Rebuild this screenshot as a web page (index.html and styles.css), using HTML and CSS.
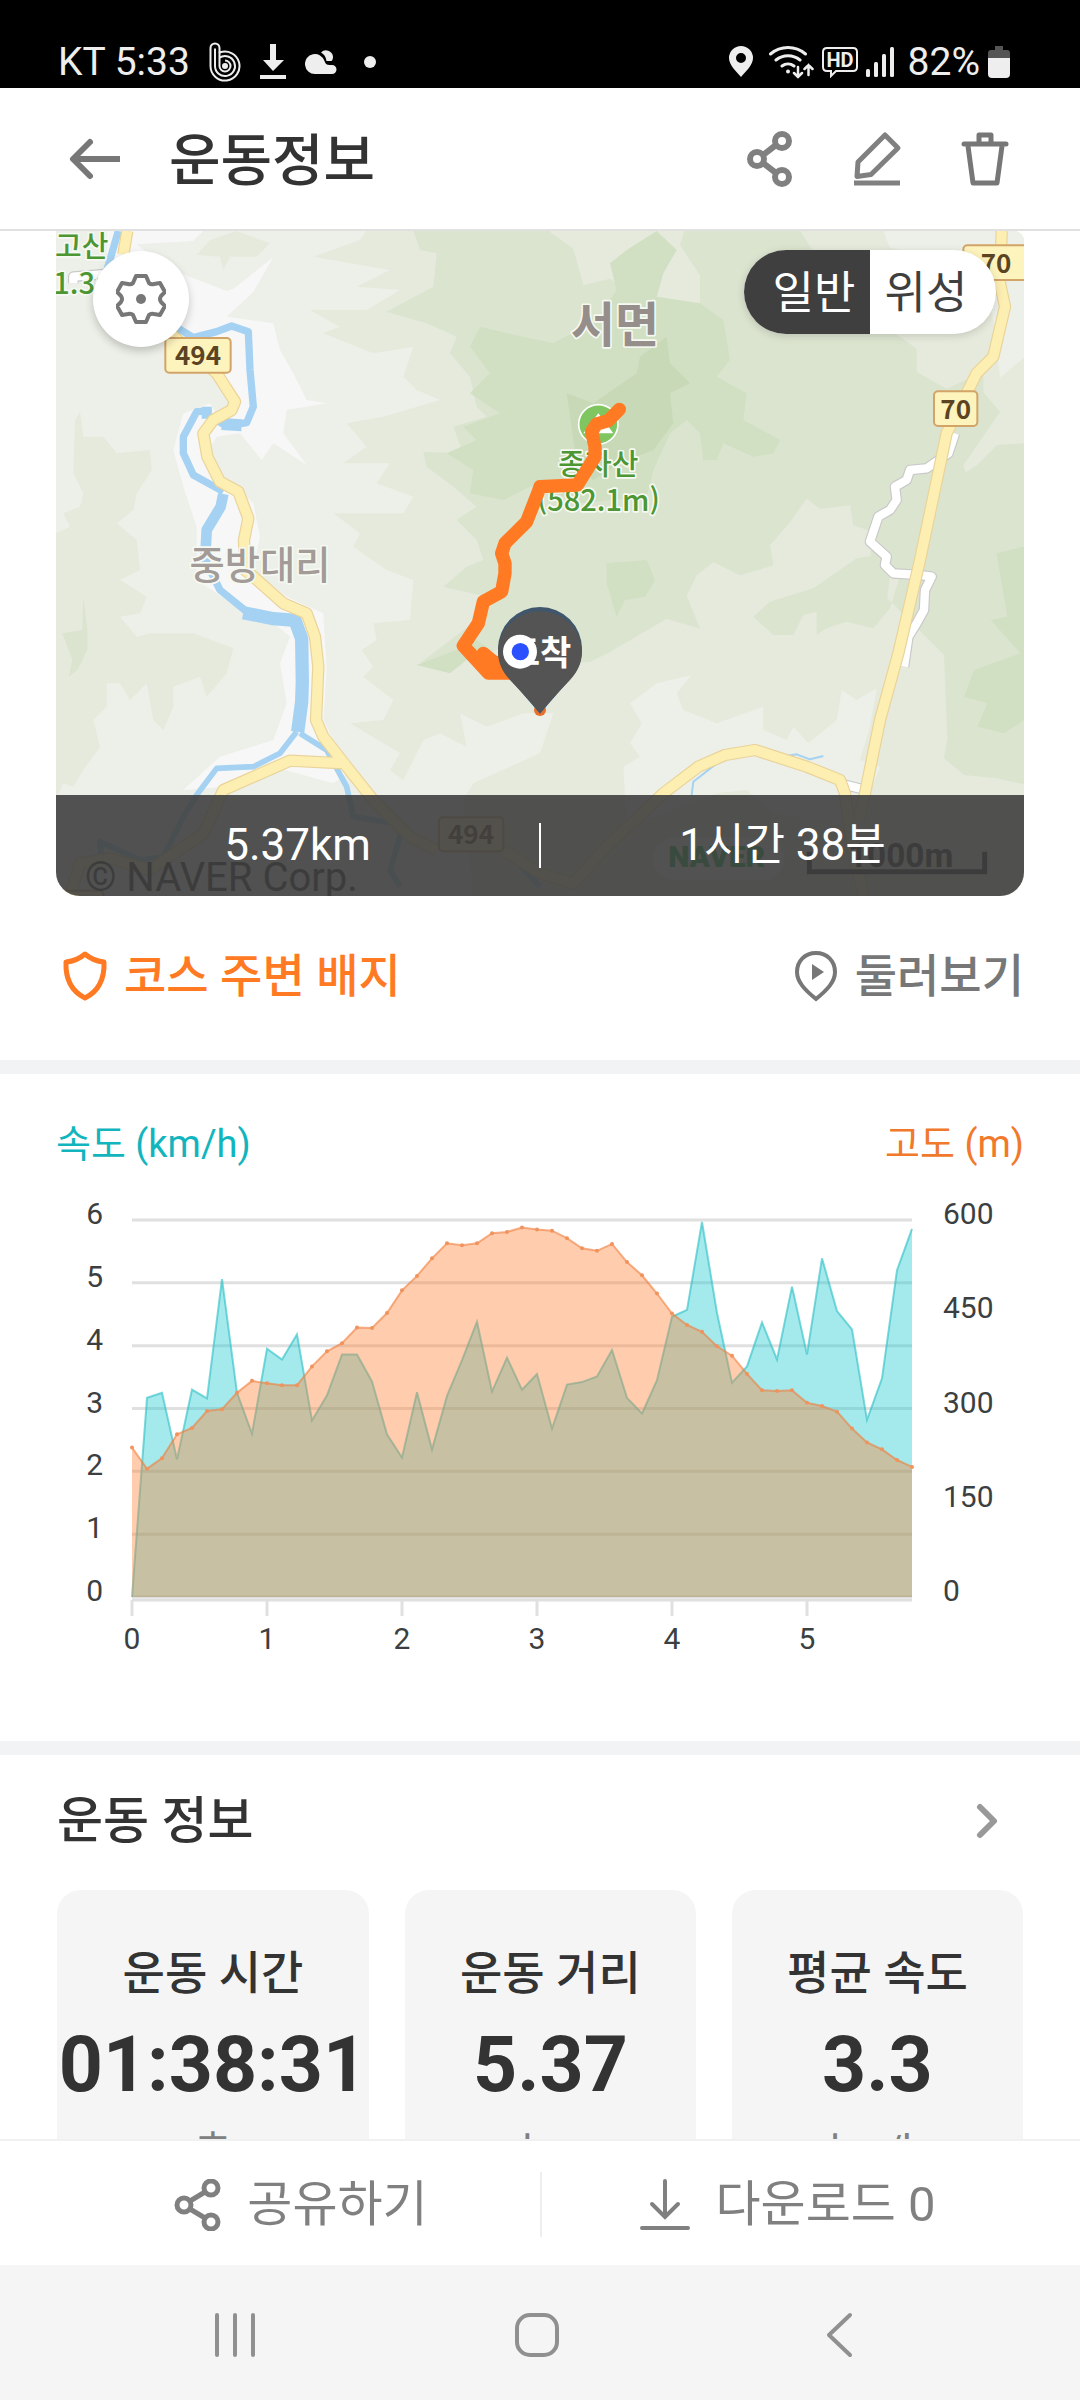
FILE: index.html
```html
<!DOCTYPE html>
<html lang="ko">
<head>
    <meta charset="UTF-8">
    <meta name="viewport" content="width=device-width, initial-scale=1.0">
    <title>운동정보</title>
    <link rel="stylesheet" href="styles.css">
</head>
<body>
    <!-- Status bar -->
    <div class="status-bar">
        <div class="status-left">
            <span>KT 5:33</span>
            <svg width="32" height="40" viewBox="0 0 32 40" fill="none" stroke="#eee" stroke-width="2">
                <path d="M1.500 24V6a4.500 4.500 0 0 1 9 0v4.600M1.500 24a14.500 14.500 0 1 0 9-13.400"/>
                <path d="M6 6.500V24a10 10 0 1 0 4.500-8.300"/>
                <path d="M10.500 10v14a5.500 5.500 0 1 0 5.500-5.500"/>
                <circle cx="16" cy="24" r="2" fill="#eee"/>
            </svg>
            <svg width="26" height="36" viewBox="0 0 26 36" fill="#eee">
                <path d="M10 0h6v16h8L13 27 3 16h7zM0 31h26v4H0z"/>
            </svg>
            <svg width="32" height="26" viewBox="0 0 32 26" fill="#eee">
                <path d="M10 25a10 10 0 1 1 9.500-13c1 3 2.500 4 5 4h2.500a4.500 4.500 0 0 1 0 9z"/>
                <path d="M16 3.500a7 7 0 0 1 12 4c0 2-.5 3.500-1.500 4.500h-5c-.5-4-2.500-7-5.500-8.500z"/>
            </svg>
            <span class="status-dot"></span>
        </div>
        <div class="status-right">
            <svg width="24" height="32" viewBox="0 0 24 32" fill="#eee">
                <path fill-rule="evenodd" d="M12 0a12 12 0 0 1 12 12c0 7-7 13-12 19C7 25 0 19 0 12A12 12 0 0 1 12 0zm0 7a5 5 0 1 0 0 10 5 5 0 0 0 0-10z"/>
            </svg>
            <svg class="icon-wifi" width="45" height="34" viewBox="0 0 45 34" fill="none" stroke="#eee" stroke-width="3" stroke-linecap="round">
                <path d="M1.500 9a27 27 0 0 1 35 0M7 15a19 19 0 0 1 24 0M13 21a10 10 0 0 1 12 0"/>
                <circle cx="19" cy="26.500" r="2" fill="#eee" stroke="none"/>
                <path d="M29 22v10m-4-4 4 4 4-4M39.500 30V20m-4 4 4-4 4 4" stroke-width="2.500"/>
            </svg>
            <svg width="36" height="32" viewBox="0 0 36 32">
                <path d="M5 2h26q4 0 4 4v15q0 4-4 4H14l-5 5V25H5q-4 0-4-4V6q0-4 4-4z" fill="none" stroke="#eee" stroke-width="2"/>
                <text x="18" y="21" text-anchor="middle" class="hd-text">HD</text>
            </svg>
            <svg width="28" height="30" viewBox="0 0 28 30" fill="#eee">
                <rect x="0" y="22" width="4" height="8" rx="1.500"/>
                <rect x="8" y="15" width="4" height="15" rx="1.500"/>
                <rect x="16" y="7" width="4" height="23" rx="1.500"/>
                <rect x="24" y="0" width="4" height="30" rx="1.500"/>
            </svg>
            <span class="battery-text">82%</span>
            <svg width="22" height="32" viewBox="0 0 22 32">
                <path d="M7 0h8v4h4q3 0 3 3v5H0V7q0-3 3-3h4z" fill="#555"/>
                <path d="M0 12h22v16q0 4-4 4H4q-4 0-4-4z" fill="#eee"/>
            </svg>
        </div>
    </div>

    <!-- Header -->
    <header class="header">
        <button class="icon-btn" type="button" aria-label="뒤로">
            <svg width="56" height="56" viewBox="0 0 56 56" fill="none" stroke="#777" stroke-width="6">
                <path d="M53 28H7"/>
                <path d="M23 11 6 28l17 17" stroke-linecap="round" stroke-linejoin="round"/>
            </svg>
        </button>
        <h1>운동정보</h1>
        <div class="header-actions">
            <button class="icon-btn" type="button" aria-label="공유">
                <svg width="56" height="56" viewBox="0 0 56 56" fill="none" stroke="#808080" stroke-width="6">
                    <circle cx="41" cy="10" r="7"/><circle cx="16" cy="28" r="7"/><circle cx="41" cy="46" r="7"/>
                    <path d="m22 24 13-10M22 32l13 10"/>
                </svg>
            </button>
            <button class="icon-btn" type="button" aria-label="편집">
                <svg width="56" height="56" viewBox="0 0 56 56" fill="none" stroke="#808080" stroke-width="5">
                    <path d="M36 4 49 17 22 43.500 8 45.500 9 31z" stroke-linejoin="round"/>
                    <path d="M5 52h46"/>
                </svg>
            </button>
            <button class="icon-btn" type="button" aria-label="삭제">
                <svg width="56" height="56" viewBox="0 0 56 56" fill="none" stroke="#777" stroke-width="5" stroke-linejoin="round">
                    <path d="M7 13h42" stroke-linecap="round"/>
                    <path d="M22 12V4h12v8M11 15l5 37h24l5-37"/>
                </svg>
            </button>
        </div>
    </header>

    <main class="content">
        <!-- Course map -->
        <section class="map-section">
            <div class="map">
                <svg class="map-canvas" viewBox="48 33 2904 1995" preserveAspectRatio="xMidYMid slice" role="img" aria-label="운동 경로 지도">
                    <rect x="48" y="33" width="2904" height="1995" fill="#ecf0e8"/>
                    <!-- hills -->
                    <g fill="#e5eadc">
                        <path d="M980 33 960 60 820 110 1050 150 950 200 1080 210 980 270 810 270 900 320 850 340 1000 400 1120 380 1090 470 1130 510 1200 540 1030 590 920 610 980 680 910 730 1050 730 1010 790 1120 830 1090 880 880 880 960 940 940 980 1040 1050 1120 1080 1110 1200 1000 1210 1010 1260 965 1290 1000 1340 970 1370 1060 1440 1030 1500 930 1510 1080 1600 1050 1650 1090 1680 1150 1560 1200 1540 1280 1580 1260 1480 1340 1520 1450 1480 1540 1480 1500 1600 1300 1690 1270 1740 1300 2028H2952V33z"/>
                        <path d="M120 575 130 650 190 650 230 700 330 690 335 750 290 820 280 870 230 910 290 960 300 1050 240 1080 320 1130 300 1180 240 1190 290 1250 330 1240 460 1240 580 1285 560 1360 500 1430 480 1370 400 1400 400 1460 370 1530 340 1500 320 1390 270 1440 240 1390 200 1390 200 1460 160 1500 180 1580 130 1650 100 1700 70 1690 48 1740V940L90 920 70 880 120 860 130 820 100 760 105 600z"/>
                        <path d="M510 60 590 33 690 70 650 110 570 110 550 150 540 110 470 105z"/>
                    </g>
                    <g fill="#ecf0e8">
                        <path d="m1770 1450 80-60 105-25-45 55 20 50 100 40 140-50v70l70 30 20-40 45 50 85-70 15-90 45 30 60-35-20 115-30 100 60 20-70 180-250-40-80-70-90 10-270 100-10-180 50-30-30-40 35-60z"/>
                        <path d="m2530 33 20 50 160 30 110-20 40 210 20 170 72-60V33zM2480 330l60 30 30-10-50 50z"/>
                    </g>
                    <path fill="#dbe4cf" d="m1120 33 20 57 50 10-10 100-140 75 120 35 90 40-20 50 60 70 20 90 30 30-100 30 30 80-120-4 10 44 80 60 70 60-60 40 60 60 20 60-50 20-70 60 130 30-30 70-170 130 150-10 100-40 120-30 50 80 90-4 60-30 170-100 100 30-40-100 30-60 50-40 80 40 100-30-10-60 60-70 50-70 40 30 90-10 10 60 60 20-10 80 100 40 80-10 70-110 50-140-20-60 110-160-50-60 0-60-110 50-90-50v-70l-140-100v-50l-150-80v-30l-70-110-120-97h-110l-30 40 10 37-85 30-15 50 60 90v120l-30-10-30 60-150-110-60-50-80 20-30-110-70-50 20-70z"/>
                    <path fill="#dbe4cf" d="m2140 1190 50-45 130-40 130-90 60-10 80 30-40 130-50 60-80-20-60 20-30 20 0-70-40 10-30 60-60 0zM2952 670l-80 5-60 60-80 50-60 80-110 100-20 170 110 110 60 60 10 250-10 60 60 50 100 10 90 20zM130 1130l12 100 0 60-30 60-25 20 10-50-30-80 60-10z"/>
                    <g fill="#d1dfc2">
                        <path d="m1850 33 60 57-40 70-20 70 130 20 70 50 20 120-40 50 90 50-10 80 110 60-20 40-60 10-90-40-20 50h-40l-10-80-40-40-50 40-50 110-20 80-210 20-120-60-100 50-100-20 10-70-80-50 90-40-40-40 110-40-90-60 60-60-60-80 30-60 80 20 140 30 130-70 60-90-20-80 50-40z"/>
                        <path d="m2870 1000 82-20v520l-60 40-80-20 30-70-70-20 30-80 140-50-90-100 50-10zM1700 1030l120-10 25 60-30 50-60 10-25 50-30-100zM1250 1290l60-30 40 30-70 30-50 40-100-25z"/>
                    </g>
                    <path fill="#c8d9b8" d="m1580 520 80 30 130-90 10-50 80-60 10 80 60 60-60 30 10 90-60 80-100 40-80 50-50-50z"/>
                    <!-- valley floor -->
                    <path fill="#f7f7f7" d="M200 33h290l-30 30-170 10 90 70 180 70 60-20-110 70 190-152-60 105-80 74 140 20 20 80 40 70 40 80 60 10-120 20-10 70 70 95-100-65-35 50-65-80-70 10-30 50 40 60 100 90 20 100-20 100 100 80 110 50 10 170-10 150 50 100 40 50-60 40-180-50-140 60-130 10 110-100 160-50 40-110-20-120 30-80-60-50-130-60-90-60V920l-40-120-30-110 30-110 80-30 30 50 50-60-70-80-120-120-240-70 40-130z"/>
                    <!-- river -->
                    <g fill="none" stroke="#a5d2f2" stroke-linejoin="round">
                        <path stroke-width="22" d="m235 33-35 120 215 172 45 28 70-18 45-17 50 17 5 115 10 110-20 48-60 10-32-18M515 572l-45 3-40 75v50l30 65 90 50"/>
                        <path stroke-width="36" d="M485 578h30M545 612l60 4"/>
                        <path stroke-width="32" d="m550 822-8 38-42 70-5 100"/>
                        <path stroke-width="22" d="m495 1020 45 90 80 65"/>
                        <path stroke-width="40" d="m610 1178 90 18 65 5 20 55 2 130-2 60-12 90"/>
                        <path stroke-width="17" d="m770 1535-50 65-80 40-110 5-60 80-40 65-60 120-70 10-120-55 5 60M780 1540l80 50 60 110 20 90 150 25-40 135 30 50M1390 1880l110 120"/>
                        <path stroke-width="6" d="m1955 1725 5-40 90-70M2240 1608l30-5 40 15 40-10"/>
                    </g>
                    <!-- minor road -->
                    <defs>
                        <path id="lanes" d="m2745 640-20 60-65 45-50 5-10 30-35 20 5 40-20 30-35 20-25 75 50 45-5 25 25 25 80 5 35 5-20 40-3 60-22 40-25 40-13 90M2410 1693l60 15M100 190v-20l120-10"/>
                        <path id="roads" d="m262 33-12 70M390 340l140 120 55 85-10 25-55 30-30 40 12 70 38 75 55 30 30 80-13 65 3 90 25 20 90 80 70 30 25 70 10 90-7 160 22 50 70 90 80 100 110 110 80 40M1390 1890l110 70 100 30 100-110 170-160 105-80 80-35 90-15 155 50 100 40 15 40 25 180 30 128M910 1630l-160-8-200 88-60 130-160 110-120-35-90 15-30 98M2885 33l-5 157 15 70-35 150-50 50-90 180-80 380-65 280-55 200-45 220-20 80"/>
                    </defs>
                    <g fill="none" stroke-linejoin="round">
                        <use href="#lanes" stroke="#c9c9c9" stroke-width="32"/>
                        <use href="#lanes" stroke="#fff" stroke-width="25"/>
                    </g>
                    <!-- main roads -->
                    <g fill="none" stroke-linejoin="round">
                        <use href="#roads" stroke="#e9d39a" stroke-width="37"/>
                        <use href="#roads" stroke="#fdeeb2" stroke-width="30"/>
                    </g>
                    <!-- road numbers -->
                    <g class="road-sign">
                        <rect x="376" y="354" width="196" height="104" rx="12"/>
                        <text x="474" y="435">494</text>
                        <rect x="1197" y="1792" width="193" height="102" rx="12"/>
                        <text x="1293" y="1873">494</text>
                        <rect x="2682" y="514" width="130" height="104" rx="12"/>
                        <text x="2747" y="596">70</text>
                        <rect x="2770" y="76" width="210" height="104" rx="12"/>
                        <text x="2868" y="158">70</text>
                        <rect x="10" y="2012" width="180" height="60" rx="12"/>
                    </g>
                    <!-- place names -->
                    <circle cx="1675" cy="613" r="59" fill="#7fc660" stroke="#fff" stroke-width="5"/>
                    <path d="m1630 640 45-60 45 60z" fill="#fff"/>
                    <g class="peak-name">
                        <text x="45" y="112">고산</text>
                        <text x="40" y="222">1.3m</text>
                        <text x="1675" y="764" text-anchor="middle">종자산</text>
                        <text x="1675" y="872" text-anchor="middle">(582.1m)</text>
                    </g>
                    <text class="village-name" x="660" y="1078">중방대리</text>
                    <text class="town-name" x="1725" y="366">서면</text>
                    <!-- course line -->
                    <circle cx="1500" cy="1470" r="18" fill="#e8702a"/>
                    <path class="course" d="m1738 568-33 34-35 10-15 23 10 45v30l-53 85-112 5-5 15-35 90-65 65-10 30 10 30v30l-10 55-55 30-15 65-45 67 75 82h80M1330 1300l30 25 60 15"/>
                    <!-- finish pin -->
                    <path d="M1500 1161a126 126 0 0 1 126 126c0 40-15 70-36 90l-90 104-90-104c-21-20-36-50-36-90a126 126 0 0 1 126-126z" fill="#3f566c"/>
                    <path d="M1500 1174c70 0 124 54 126 120 0 36-15 64-36 86l-90 95-90-95c-21-22-36-50-36-86 2-66 56-120 126-120z" fill="#545454"/>
                    <text class="pin-text" x="1500" y="1336">도착</text>
                    <circle cx="1440" cy="1295" r="51" fill="#fff"/>
                    <circle cx="1441" cy="1295" r="26" fill="#2a50ff"/>
                    <!-- attribution -->
                    <rect x="1837" y="1852" width="395" height="128" rx="64" fill="#fff" fill-opacity=".6"/>
                    <text class="naver-logo" x="2030" y="1942">NAVER</text>
                    <text class="copyright" x="135" y="2013">© NAVER Corp.</text>
                    <text class="scale-text" x="2740" y="1940">1000m</text>
                    <path d="M2308 1895v60h526v-60" fill="none" stroke="#222" stroke-width="15"/>
                </svg>
                <button class="map-settings" type="button" aria-label="지도 설정">
                    <svg width="50" height="50" viewBox="0 0 50 50" fill="none" stroke="#777" stroke-width="4" stroke-linejoin="round">
                        <path d="M20 2h10l3 7q2 2 5 1l6-1 5 9-4 4q-2 3 0 6l4 4-5 9-6-1q-3-1-5 1l-3 7H20l-3-7q-2-2-5-1l-6 1-5-9 4-4q2-3 0-6l-4-4 5-9 6 1q3 1 5-1z"/>
                        <circle cx="25" cy="25" r="5" fill="#777" stroke="none"/>
                    </svg>
                </button>
                <div class="map-type">
                    <button class="active" type="button">일반</button>
                    <button type="button">위성</button>
                </div>
                <div class="map-summary">
                    <span>5.37km</span>
                    <span>1시간 38분</span>
                </div>
            </div>
            <div class="course-links">
                <a class="badge-link" href="#">
                    <svg width="46" height="52" viewBox="0 0 46 52" fill="none" stroke="#ff7a22" stroke-width="5" stroke-linejoin="round">
                        <path d="M23 4q8 7 19 8 1 26-19 36Q3 38 4 12 15 11 23 4z"/>
                    </svg>
                    코스 주변 배지
                </a>
                <a class="around-link" href="#">
                    <svg width="46" height="52" viewBox="0 0 46 52" fill="none" stroke="#777" stroke-width="4">
                        <path d="M23 3c11 0 19 8 19 19 0 10-8 18-19 27C12 40 4 32 4 22 4 11 12 3 23 3z"/>
                        <path d="M19 14v16l12-8z" fill="#777" stroke="none"/>
                    </svg>
                    둘러보기
                </a>
            </div>
        </section>

        <!-- Speed / altitude chart -->
        <section class="chart-section">
            <div class="chart-head">
                <span class="speed-label">속도 (km/h)</span>
                <span class="altitude-label">고도 (m)</span>
            </div>
            <svg id="chart" class="chart" viewBox="0 0 968 472" role="img" aria-label="속도와 고도 그래프"></svg>
        </section>

        <!-- Workout info -->
        <section class="info-section">
            <div class="info-head">
                <h2>운동 정보</h2>
                <button class="icon-btn" type="button" aria-label="더보기">
                    <svg width="24" height="40" viewBox="0 0 24 40" fill="none" stroke="#999" stroke-width="6" stroke-linecap="round" stroke-linejoin="round">
                        <path d="m5 6 14 14L5 34"/>
                    </svg>
                </button>
            </div>
            <div class="cards">
                <div class="card">
                    <div class="card-title">운동 시간</div>
                    <div class="card-value">01:38:31</div>
                    <div class="card-unit">초</div>
                </div>
                <div class="card">
                    <div class="card-title">운동 거리</div>
                    <div class="card-value">5.37</div>
                    <div class="card-unit">km</div>
                </div>
                <div class="card">
                    <div class="card-title">평균 속도</div>
                    <div class="card-value">3.3</div>
                    <div class="card-unit">km/h</div>
                </div>
            </div>
        </section>
    </main>

    <!-- Bottom actions -->
    <div class="action-bar">
        <button type="button">
            <svg width="50" height="52" viewBox="0 0 50 52" fill="none" stroke="#808080" stroke-width="5">
                <circle cx="39" cy="9" r="7"/><circle cx="12" cy="26" r="7"/><circle cx="39" cy="43" r="7"/>
                <path d="m18 22 15-9M18 30l15 9"/>
            </svg>
            공유하기
        </button>
        <button type="button">
            <svg width="50" height="52" viewBox="0 0 50 52" fill="none" stroke="#808080" stroke-width="4" stroke-linecap="round">
                <path d="M25 2v35M12 25l13 13 13-13M2 49h46"/>
            </svg>
            다운로드 0
        </button>
    </div>

    <!-- System navigation -->
    <nav class="system-nav">
        <button type="button" aria-label="최근 앱">
            <svg width="44" height="46" viewBox="0 0 44 46" stroke="#909090" stroke-width="4" stroke-linecap="round">
                <path d="M4 3v40M22 3v40M40 3v40"/>
            </svg>
        </button>
        <button type="button" aria-label="홈">
            <svg width="46" height="46" viewBox="0 0 46 46" fill="none" stroke="#909090" stroke-width="4">
                <rect x="3" y="3" width="40" height="40" rx="13"/>
            </svg>
        </button>
        <button type="button" aria-label="뒤로 가기">
            <svg width="28" height="46" viewBox="0 0 28 46" fill="none" stroke="#909090" stroke-width="4" stroke-linecap="round" stroke-linejoin="round">
                <path d="M25 3 4 23l21 20"/>
            </svg>
        </button>
    </nav>

    <script>
        const speed = [
            0, 3.17, 3.25, 2.19, 3.3, 3.16, 5.06, 3.25, 2.6, 3.95, 3.78, 4.18, 2.81, 3.21, 3.86, 3.86, 3.43, 2.59,
            2.22, 3.26, 2.35, 3.2, 3.77, 4.38, 3.27, 3.81, 3.3, 3.55, 2.68, 3.38, 3.42, 3.51, 3.93, 3.17, 2.92, 3.45,
            4.46, 4.57, 5.97, 4.52, 3.41, 3.67, 4.37, 3.78, 4.94, 3.86, 5.39, 4.55, 4.26, 2.82, 3.48, 5.2, 5.86
        ];
        const altitude = [
            238, 204, 221, 259, 269, 296, 299, 325, 344, 340, 337, 337, 367, 391, 404, 429, 428, 452,
            488, 511, 539, 563, 560, 563, 579, 581, 588, 585, 583, 571, 555, 551, 562, 533, 512, 483,
            451, 433, 422, 399, 384, 355, 329, 328, 329, 309, 304, 295, 268, 246, 235, 218, 207
        ];

        const plot = { left: 76, right: 856, top: 40, bottom: 417 };
        const height = plot.bottom - plot.top;
        const step = (plot.right - plot.left) / (speed.length - 1);
        const toPoints = (values, max) => values.map((v, i) => [plot.left + i * step, plot.bottom - v / max * height]);
        const area = (points) => `${plot.left},${plot.bottom} ${points.join(' ')} ${plot.right},${plot.bottom}`;

        let svg = '';
        // Grid lines and left axis
        for (let i = 0; i <= 6; i++) {
            const y = plot.bottom - i * height / 6;
            svg += `<line class="grid" x1="${plot.left}" x2="${plot.right}" y1="${y}" y2="${y}"/>`;
            svg += `<text class="axis" x="47" y="${y + 4}" text-anchor="end">${i}</text>`;
        }
        // Right axis
        for (let i = 0; i <= 4; i++) {
            const y = plot.bottom - i * height / 4;
            svg += `<text class="axis" x="887" y="${y + 4}">${i * 150}</text>`;
        }
        // Distance axis, 9 samples per tick
        svg += `<line class="grid" x1="${plot.left}" x2="${plot.right}" y1="420" y2="420"/>`;
        for (let i = 0; i <= 5; i++) {
            const x = plot.left + i * step * 9;
            svg += `<line class="grid" x1="${x}" x2="${x}" y1="420" y2="436"/>`;
            svg += `<text class="axis" x="${x}" y="469" text-anchor="middle">${i}</text>`;
        }

        const speedPoints = toPoints(speed, 6);
        const altitudePoints = toPoints(altitude, 600);
        svg += `<polygon class="speed-area" points="${area(speedPoints)}"/>`;
        svg += `<polyline class="speed-line" points="${speedPoints.join(' ')}"/>`;
        svg += `<polygon class="altitude-area" points="${area(altitudePoints)}"/>`;
        svg += `<polyline class="altitude-line" points="${altitudePoints.join(' ')}"/>`;
        altitudePoints.forEach(([x, y]) => {
            svg += `<circle class="altitude-dot" cx="${x}" cy="${y}" r="2"/>`;
        });
        document.getElementById('chart').innerHTML = svg;
    </script>
</body>
</html>
```
FILE: styles.css
```css
* {
    box-sizing: border-box;
}
body {
    display: flex;
    flex-direction: column;
    height: 100vh;
    margin: 0;
    font-family: Roboto, 'Noto Sans CJK KR', sans-serif;
    color: #333;
    background: #fff;
}
button {
    padding: 0;
    border: none;
    background: none;
    font: inherit;
    color: inherit;
    cursor: pointer;
}
a {
    color: inherit;
    text-decoration: none;
}
svg {
    display: block;
}
h1, h2 {
    margin: 0;
}

/* Status bar */
.status-bar {
    flex: none;
    display: flex;
    justify-content: space-between;
    align-items: center;
    height: 88px;
    padding: 36px 70px 0 58px;
    background: #000;
    color: #eee;
    font-size: 39px;
    line-height: 52px;
}
.status-left, .status-right {
    display: flex;
    align-items: center;
}
.status-left {
    gap: 19px;
}
.status-right {
    gap: 8px;
}
.status-dot {
    width: 12px;
    height: 12px;
    margin-left: 8px;
    border-radius: 50%;
    background: #eee;
}
.icon-wifi {
    margin-left: 8px;
}
.hd-text {
    font-size: 20px;
    font-weight: 700;
    fill: #eee;
}
.battery-text {
    margin-left: 6px;
}

/* Header */
.header {
    flex: none;
    display: flex;
    align-items: center;
    height: 143px;
    padding: 0 67px;
    border-bottom: 2px solid #e0e0e0;
}
.header h1 {
    margin-left: 46px;
    padding-top: 4px;
    font-size: 56px;
    font-weight: 500;
    line-height: 80px;
}
.header-actions {
    display: flex;
    gap: 52px;
    margin-left: auto;
}

.content {
    flex: 1;
    min-height: 0;
    overflow: hidden;
}

/* Map */
.map-section {
    padding: 0 56px;
    border-bottom: 14px solid #f1f3f5;
}
.map {
    position: relative;
    overflow: hidden;
    border-radius: 0 10px 24px 24px;
}
.map-canvas {
    width: 100%;
    height: auto;
}
.road-sign rect {
    fill: #fdf3bd;
    stroke: #d2a468;
    stroke-width: 6px;
}
.road-sign text {
    font-family: 'Noto Sans CJK KR', sans-serif;
    font-size: 78px;
    font-weight: 700;
    fill: #5c4322;
    text-anchor: middle;
}
.peak-name, .village-name, .town-name {
    font-family: 'Noto Sans CJK KR', sans-serif;
    font-weight: 500;
    stroke: #f6f9f2;
    stroke-width: 10px;
    stroke-linejoin: round;
    paint-order: stroke;
}
.peak-name {
    font-size: 87px;
    fill: #4c9634;
}
.village-name {
    font-size: 115px;
    fill: #a39b98;
    text-anchor: middle;
}
.town-name {
    font-size: 144px;
    font-weight: 700;
    fill: #968e8b;
    text-anchor: middle;
}
.course {
    fill: none;
    stroke: #ff7a22;
    stroke-width: 40px;
    stroke-linecap: round;
    stroke-linejoin: round;
}
.pin-text {
    font-size: 102px;
    font-weight: 700;
    fill: #fff;
    text-anchor: middle;
}
.naver-logo {
    font-size: 90px;
    font-weight: 900;
    fill: #03a83c;
    text-anchor: middle;
}
.copyright {
    font-size: 120px;
    fill: #222;
}
.scale-text {
    font-size: 100px;
    font-weight: 700;
    fill: #222;
    text-anchor: end;
}
.map-settings {
    position: absolute;
    top: 20px;
    left: 37px;
    display: flex;
    justify-content: center;
    align-items: center;
    width: 96px;
    height: 96px;
    border-radius: 50%;
    background: #fff;
    box-shadow: 0 4px 8px rgba(0, 0, 0, 0.2);
}
.map-type {
    position: absolute;
    top: 19px;
    right: 28px;
    display: flex;
    overflow: hidden;
    border-radius: 42px;
    background: #fff;
    color: #3f3f3f;
    font-size: 45px;
    box-shadow: 0 2px 8px rgba(0, 0, 0, 0.15);
}
.map-type button {
    width: 126px;
    padding: 3px 14px 0 0;
    line-height: 81px;
}
.map-type .active {
    padding: 3px 0 0 14px;
    background: #3f3f3f;
    color: #fff;
}
.map-summary {
    position: absolute;
    left: 0;
    right: 0;
    bottom: 0;
    display: flex;
    align-items: center;
    padding: 28px 0;
    background: rgba(63, 63, 63, 0.9);
    color: #fff;
    font-size: 44px;
    line-height: 45px;
}
.map-summary span {
    flex: 1;
    text-align: center;
}
.map-summary span + span {
    border-left: 2px solid #fff;
}

.course-links {
    display: flex;
    justify-content: space-between;
    padding: 46px 0 50px;
    font-size: 46px;
    font-weight: 500;
    line-height: 68px;
}
.course-links a {
    display: flex;
    align-items: center;
    gap: 16px;
}
.badge-link {
    padding-left: 6px;
    color: #ff7a22;
}
.around-link {
    color: #777;
}

/* Chart */
.chart-section {
    padding: 42px 56px 89px;
    border-bottom: 14px solid #f1f3f5;
}
.chart-head {
    display: flex;
    justify-content: space-between;
    font-size: 38px;
    line-height: 56px;
    margin-bottom: 8px;
}
.speed-label {
    color: #12b5bd;
}
.altitude-label {
    color: #f0792b;
}
.chart {
    width: 100%;
    height: auto;
    overflow: visible;
}
.axis {
    font-size: 30px;
    fill: #3c3f41;
}
.grid {
    stroke: #e0e0e0;
    stroke-width: 3px;
}
.speed-area {
    fill: rgba(27, 200, 206, 0.4);
}
.altitude-area {
    fill: rgba(255, 130, 52, 0.4);
}
.speed-line, .altitude-line {
    fill: none;
    stroke-width: 2px;
}
.speed-line {
    stroke: rgba(40, 190, 196, 0.6);
}
.altitude-line {
    stroke: rgba(240, 125, 60, 0.6);
}
.altitude-dot {
    fill: #f0935c;
}

/* Workout info */
.info-section {
    padding: 30px 57px 60px;
}
.info-head {
    display: flex;
    justify-content: space-between;
    align-items: center;
    padding-right: 24px;
    margin-bottom: 33px;
}
.info-head h2 {
    font-size: 50px;
    font-weight: 500;
    line-height: 72px;
}
.cards {
    display: grid;
    grid-template-columns: 15fr 14fr 14fr;
    gap: 36px;
}
.card {
    min-width: 0;
    padding: 49px 0 40px;
    border-radius: 24px;
    background: #f5f5f5;
    text-align: center;
}
.card-title {
    font-size: 46px;
    font-weight: 500;
    line-height: 68px;
}
.card-value {
    font-size: 77px;
    font-weight: 700;
    line-height: 117px;
}
.card-unit {
    color: #808080;
    font-size: 40px;
    line-height: 54px;
}

/* Bottom actions */
.action-bar {
    flex: none;
    display: grid;
    grid-template-columns: 1fr 1fr;
    padding: 31px 0 28px;
    border-top: 2px solid #f1f1f1;
    color: #808080;
    font-size: 49px;
    line-height: 65px;
}
.action-bar button {
    display: flex;
    justify-content: center;
    align-items: center;
    gap: 25px;
    padding-left: 60px;
}
.action-bar button + button {
    padding: 0 46px 0 0;
    border-left: 2px solid #eee;
}

/* System navigation */
.system-nav {
    flex: none;
    display: grid;
    grid-template-columns: repeat(3, 1fr);
    height: 135px;
    padding: 4px 90px 0 84px;
    background: #f5f5f5;
}
.system-nav button {
    display: flex;
    justify-content: center;
    align-items: center;
}
```
